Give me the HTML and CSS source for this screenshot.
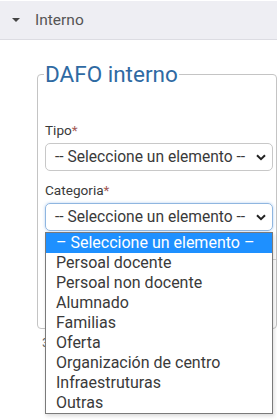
FILE: index.html
```html
<!DOCTYPE html>
<html lang="gl">
<head>
    <meta charset="UTF-8">
    <meta name="viewport" content="width=device-width, initial-scale=1.0">
    <title>DAFO interno</title>
    <link rel="stylesheet" href="styles.css">
</head>
<body>
    <div class="section-head">
        <span class="caret"></span>
        <span class="section-title">Interno</span>
    </div>

    <div class="page">
        <fieldset class="box">
            <legend>DAFO interno</legend>

            <div class="field first">
                <label class="label">Tipo<span class="req">*</span></label>
                <div class="select">
                    <span>-- Seleccione un elemento --</span>
                    <svg class="chev" width="10" height="7" viewBox="0 0 10 7"><path d="M1 1.2 L5 5.2 L9 1.2" fill="none" stroke="#222" stroke-width="2"/></svg>
                </div>
            </div>

            <div class="field">
                <label class="label">Categoria<span class="req">*</span></label>
                <div class="select-wrap">
                    <div class="select focused">
                        <span>-- Seleccione un elemento --</span>
                        <svg class="chev" width="10" height="7" viewBox="0 0 10 7"><path d="M1 1.2 L5 5.2 L9 1.2" fill="none" stroke="#222" stroke-width="2"/></svg>
                    </div>
                    <ul class="options">
                        <li class="active">&ndash; Seleccione un elemento &ndash;</li>
                        <li>Persoal docente</li>
                        <li>Persoal non docente</li>
                        <li>Alumnado</li>
                        <li>Familias</li>
                        <li>Oferta</li>
                        <li>Organización de centro</li>
                        <li>Infraestruturas</li>
                        <li>Outras</li>
                    </ul>
                </div>
            </div>

            <div class="hidden-box"></div>
        </fieldset>

        <p class="after">3 elementos engadidos ao DAFO c</p>
    </div>
</body>
</html>
```

FILE: styles.css
```css
body {
    margin: 0;
    font-family: Roboto, "Liberation Sans", sans-serif;
    color: #333;
    background: #fff;
    min-height: 420px;
}
.section-head {
    height: 38px;
    background: #eeeef3;
    border-top: 1px solid #fff;
    border-bottom: 1px solid #dcdce2;
    display: flex;
    align-items: center;
    padding-left: 12px;
}
.caret {
    width: 0;
    height: 0;
    border-left: 4px solid transparent;
    border-right: 4px solid transparent;
    border-top: 4px solid #444;
    margin-right: 15px;
}
.section-title {
    font-size: 15.5px;
    color: #555;
}
.page {
    padding: 22px 0 0 37px;
}
.box {
    margin: 0;
    padding: 0 0 0 7px;
    border: 1px solid #c4c4c4;
    border-radius: 4px;
    min-width: 0;
}
.box legend {
    font-size: 22.5px;
    color: #2f6aa3;
    padding: 0 1px;
    margin-left: -1px;
    line-height: 24px;
}
.field.first {
    margin-top: 36px;
}
.label {
    display: block;
    font-size: 13.6px;
    line-height: 16px;
    margin-bottom: 5px;
    color: #3a3a3a;
}
.req {
    color: #a45a55;
}
.select {
    box-sizing: border-box;
    width: 228px;
    height: 28px;
    border: 1px solid #c8c8c8;
    border-radius: 5px;
    display: flex;
    align-items: center;
    justify-content: space-between;
    padding: 0 6px 0 9px;
    font-size: 15.6px;
    color: #3a3a3a;
    margin-bottom: 11px;
}
.select.focused {
    border-color: #8fb6e0;
    box-shadow: 0 0 3px rgba(102, 160, 230, 0.5);
    margin-bottom: 0;
}
.select-wrap {
    position: relative;
}
.options {
    position: absolute;
    top: 29px;
    left: 0;
    z-index: 2;
    box-sizing: border-box;
    width: 228px;
    margin: 0;
    padding: 0;
    list-style: none;
    background: #fff;
    border: 1px solid #7a7a7a;
    box-shadow: 1px 2px 4px rgba(0, 0, 0, 0.15);
}
.options li {
    height: 20px;
    line-height: 20px;
    padding-left: 10px;
    font-size: 16px;
    color: #3a3a3a;
    white-space: nowrap;
}
.options li.active {
    background: #1e90ff;
    color: #fff;
}
.hidden-box {
    height: 68px;
    margin-top: 28px;
    border-top: 1px solid #d4d4d4;
}
.after {
    margin: 6px 0 0 5px;
    font-size: 13px;
    color: #666;
}
```
